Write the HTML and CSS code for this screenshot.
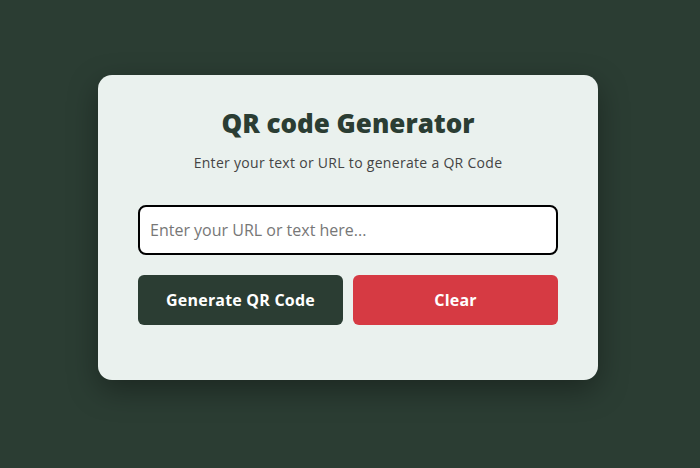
FILE: index.html
```html
<!DOCTYPE html>
<html lang="en">
<head>
<meta charset="utf-8">
<title>QR code Generator</title>
<link rel="stylesheet" href="styles.css">
</head>
<body>
<main class="card">
  <h1 class="title">QR code Generator</h1>
  <p class="subtitle">Enter your text or URL to generate a QR Code</p>
  <input class="field" type="text" placeholder="Enter your URL or text here..." autofocus>
  <div class="actions">
    <button class="btn btn-generate" type="button">Generate QR Code</button>
    <button class="btn btn-clear" type="button">Clear</button>
  </div>
</main>
</body>
</html>
```
FILE: styles.css
```css
* { box-sizing: border-box; }
html, body { margin: 0; height: 100%; }
body {
  background: #2b3d33;
  font-family: "Open Sans", "DejaVu Sans", sans-serif;
  overflow: hidden;
}
.card {
  width: 500px;
  margin: 75px 0 0 98px;
  background: #eaf1ee;
  border-radius: 14px;
  padding: 28px 40px 55px;
  box-shadow: 0 10px 30px rgba(0, 0, 0, 0.35);
  text-align: center;
}
.title {
  margin: 0;
  font-size: 26px;
  line-height: 40px;
  font-weight: 800;
  color: #2b3d33;
}
.subtitle {
  margin: 10px 0 0;
  font-size: 14px;
  line-height: 20px;
  font-weight: 500;
  letter-spacing: 0.3px;
  color: #444;
}
.field {
  display: block;
  width: 100%;
  height: 50px;
  margin-top: 32px;
  padding: 0 10px;
  border: 2px solid #000;
  border-radius: 8px;
  background: #fff;
  font-family: inherit;
  font-size: 16px;
  color: #222;
  outline: none;
}
.field::placeholder { color: #777; }
.actions {
  display: flex;
  gap: 10px;
  margin-top: 20px;
}
.btn {
  flex: 1;
  height: 50px;
  border: none;
  border-radius: 6px;
  font-family: inherit;
  font-size: 16px;
  font-weight: 700;
  letter-spacing: 0.2px;
  color: #fff;
}
.btn-generate { background: #2b3d33; }
.btn-clear { background: #d63a43; }
```
